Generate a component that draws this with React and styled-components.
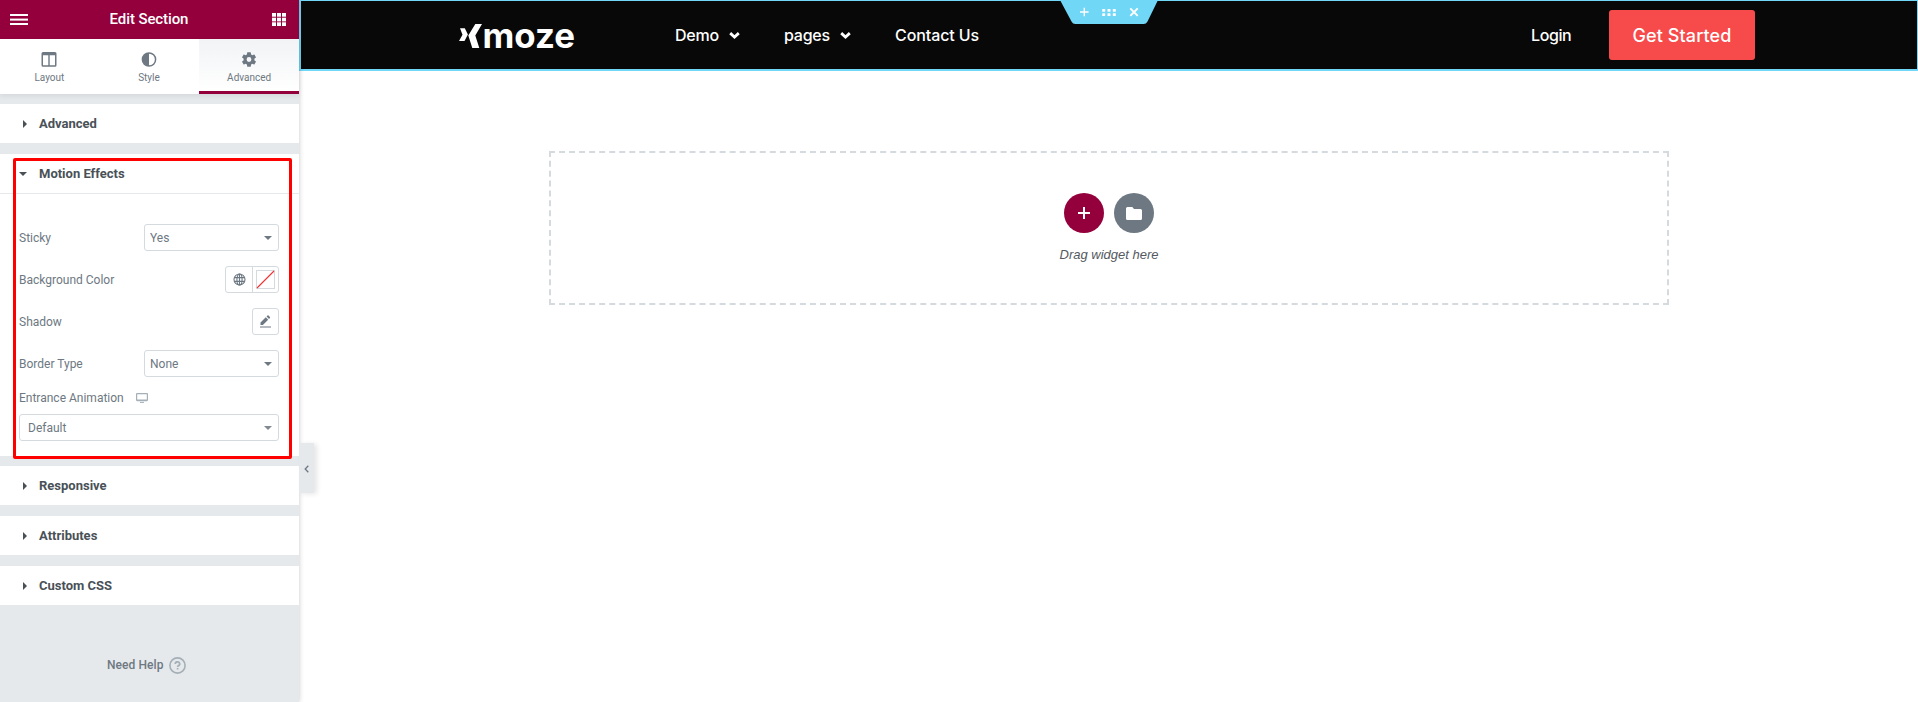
import React from 'react';
import styled, { createGlobalStyle } from 'styled-components';

const Global = createGlobalStyle`
  *, *::before, *::after { box-sizing: border-box; }
  body { margin: 0; background: #fff; overflow: hidden; }
  svg { display: block; flex: none; }
`;

const Editor = styled.div`
  display: flex;
  height: 702px;
  font-family: Roboto, 'Liberation Sans', sans-serif;
  font-size: 12px;
  color: #6d7882;
`;

/* ---------- side panel ---------- */

const Panel = styled.aside`
  position: relative;
  z-index: 1;
  flex: none;
  width: 299px;
  height: 702px;
  display: flex;
  flex-direction: column;
  background: #e6e9ec;
  box-shadow: 0 0 5px rgba(0, 0, 0, 0.22);
`;

const PanelHeader = styled.header`
  flex: none;
  height: 39px;
  padding: 0 13px 1px 10px;
  display: flex;
  align-items: center;
  justify-content: space-between;
  background: #93003c;
  color: #fff;
  font-size: 15px;
  font-weight: 500;
`;

const PanelTitle = styled.span`
  margin-left: -2px;
  letter-spacing: -0.1px;
`;

const Tabs = styled.nav`
  flex: none;
  display: grid;
  grid-template-columns: repeat(3, 1fr);
  height: 55px;
  background: #fff;
  box-shadow: 0 2px 5px rgba(0, 0, 0, 0.08);
`;

const Tab = styled.div`
  display: flex;
  flex-direction: column;
  align-items: center;
  gap: 5px;
  padding: 13px ${(p) => (p.$active ? 0 : 1)}px 0 0;
  font-size: 10px;
  line-height: 12px;
  border-bottom: 3px solid ${(p) => (p.$active ? '#93003c' : 'transparent')};
  background: ${(p) => (p.$active ? 'linear-gradient(#f1f3f5, #fff)' : 'none')};
`;

const Section = styled.section`
  flex: none;
  height: ${(p) => p.$height || 39}px;
  margin-top: ${(p) => p.$gap || 11}px;
  background: #fff;
`;

const SectionTitle = styled.h2`
  margin: 0;
  height: ${(p) => (p.$open ? 40 : 39)}px;
  padding: 0 0 0 ${(p) => (p.$open ? 19 : 23)}px;
  display: flex;
  align-items: center;
  gap: 12px;
  border-bottom: ${(p) => (p.$open ? '1px solid #e6e9ec' : 'none')};
  color: #495157;
  font-size: 13px;
  font-weight: 700;
`;

const Controls = styled.div`
  display: flex;
  flex-direction: column;
  padding: 30px 20px 0 19px;
`;

const Control = styled.div`
  display: flex;
  align-items: center;
  justify-content: space-between;
  height: 27px;
  margin-bottom: 15px;
`;

const StackedLabel = styled.div`
  display: flex;
  align-items: center;
  gap: 12px;
  height: 14px;
  margin: -1px 0 9px;
`;

const Select = styled.div`
  display: flex;
  align-items: center;
  justify-content: space-between;
  width: ${(p) => (p.$wide ? '260px' : '135px')};
  height: 27px;
  padding: 0 6px 0 ${(p) => (p.$wide ? 8 : 5)}px;
  border: 1px solid #d5dadf;
  border-radius: 3px;
  background: #fff;
`;

const ButtonGroup = styled.div`
  display: flex;
  height: 27px;
  border: 1px solid #d5dadf;
  border-radius: 3px;
`;

const IconButton = styled.span`
  width: ${(p) => p.$width || 25}px;
  display: flex;
  align-items: center;
  justify-content: center;

  & + & {
    border-left: 1px solid #d5dadf;
  }
`;

const Help = styled.div`
  display: flex;
  align-items: center;
  gap: 5px;
  margin: 50px 0 0 107px;
  height: 20px;
  font-weight: 500;
  letter-spacing: 0.08px;
`;

const Collapse = styled.div`
  position: absolute;
  left: 299px;
  top: 443px;
  width: 15px;
  height: 50px;
  padding-top: 2px;
  display: flex;
  align-items: center;
  justify-content: center;
  background: #e6e9ec;
  box-shadow: 3px 1px 5px rgba(0, 0, 0, 0.1);
`;

const Highlight = styled.div`
  position: absolute;
  left: 13px;
  top: 158px;
  width: 279px;
  height: 301px;
  border: 3px solid #f00;
  border-radius: 2px;
`;

/* ---------- page preview ---------- */

const Preview = styled.main`
  flex: 1;
  display: flex;
  flex-direction: column;
`;

const SiteHeader = styled.header`
  position: relative;
  display: flex;
  align-items: center;
  height: 71px;
  padding-left: 157px;
  border: solid #71d7f7;
  border-width: 1px 1px 2px 2px;
  background: #080808;
  color: #fff;
  font-family: Inter, sans-serif;
  font-size: 16px;
  font-weight: 500;
`;

const NavMenu = styled.nav`
  display: flex;
  flex: none;
  margin-left: 93px;
`;

const NavLink = styled.span`
  flex: none;
  display: flex;
  align-items: center;
  gap: 10px;
  width: ${(p) => p.$width}px;
  white-space: nowrap;
  letter-spacing: ${(p) => p.$track || 0}px;
`;

const Cta = styled.span`
  display: flex;
  align-items: center;
  justify-content: center;
  width: 146px;
  height: 50px;
  border-radius: 3px;
  background: #f74a4a;
  font-size: 18px;
  letter-spacing: 0.08px;
`;

const SectionHandle = styled.div`
  position: absolute;
  left: 759px;
  top: -1px;
`;

const DropZone = styled.div`
  display: flex;
  flex-direction: column;
  align-items: center;
  width: 1120px;
  height: 154px;
  margin: 80px 0 0 250px;
  padding-top: 40px;
  border: 2px dashed #d5dadf;
`;

const Actions = styled.div`
  display: flex;
  gap: 10px;
`;

const RoundButton = styled.span`
  display: flex;
  align-items: center;
  justify-content: center;
  width: 40px;
  height: 40px;
  border-radius: 50%;
  background: ${(p) => p.$color};
`;

const Hint = styled.span`
  margin-top: 13px;
  font-family: 'Liberation Sans', Arial, sans-serif;
  font-size: 13px;
  line-height: 17px;
  font-style: italic;
  color: #54595f;
`;

/* ---------- icons ---------- */

const Menu = () => (
  <svg width="18" height="13" fill="#fff">
    <rect y="1" width="18" height="2" /><rect y="5.6" width="18" height="2" /><rect y="10" width="18" height="2" />
  </svg>
);

const Grid = () => (
  <svg width="14" height="13" fill="#fff">
    {[0, 4.7, 9.3].map((y) => [0, 5, 10].map((x) => (
      <rect key={`${x}-${y}`} x={x} y={y} width="4" height="3.7" />
    )))}
  </svg>
);

const Columns = () => (
  <svg width="16" height="15" fill="#6d7882">
    <path fillRule="evenodd" d="M2 0h12a1.5 1.5 0 0 1 1.5 1.5v11.7a1.5 1.5 0 0 1-1.5 1.5H2A1.5 1.5 0 0 1 .5 13.2V1.5A1.5 1.5 0 0 1 2 0zM2 3.300v10h5.300v-10zM8.700 3.300v10H14v-10z" />
  </svg>
);

const Contrast = () => (
  <svg width="16" height="15">
    <circle cx="8" cy="7.5" r="6.6" fill="none" stroke="#6d7882" strokeWidth="1.5" />
    <path d="M8 1a6.500 6.500 0 0 0 0 13z" fill="#6d7882" />
  </svg>
);

const Gear = () => (
  <svg width="16" height="15" viewBox="2 2 20 20" fill="#6d7882">
    <path d="M19.140 12.940c.04-.3.06-.61.06-.94 0-.32-.02-.64-.07-.94l2.030-1.580a.49.49 0 0 0 .12-.61l-1.920-3.320a.488.488 0 0 0-.59-.22l-2.390.96c-.5-.38-1.030-.7-1.620-.94l-.36-2.540a.484.484 0 0 0-.48-.41h-3.840c-.24 0-.43.17-.47.41l-.36 2.540c-.59.24-1.130.57-1.620.94l-2.390-.96c-.22-.08-.47 0-.59.22L2.740 8.870c-.12.21-.08.47.12.61l2.030 1.580c-.05.3-.09.63-.09.94s.02.64.07.94l-2.030 1.580a.49.49 0 0 0-.12.61l1.920 3.320c.12.22.37.29.59.22l2.390-.96c.5.38 1.030.7 1.620.94l.36 2.540c.05.24.24.41.48.41h3.840c.24 0 .44-.17.47-.41l.36-2.540c.59-.24 1.130-.56 1.620-.94l2.390.96c.22.08.47 0 .59-.22l1.920-3.320c.12-.22.07-.47-.12-.61l-2.010-1.580zM12 15.200a3.200 3.200 0 1 1 0-6.400 3.200 3.200 0 0 1 0 6.400z" />
  </svg>
);

const CaretRight = () => (
  <svg width="4" height="8" fill="#495157"><path d="M0 0l4 4-4 4z" /></svg>
);

const CaretDown = ({ color = '#6d7882' }) => (
  <svg width="8" height="4" fill={color}><path d="M0 0h8L4 4z" /></svg>
);

const Globe = () => (
  <svg width="13" height="13" fill="none" stroke="#6d7882" strokeWidth="1.1">
    <circle cx="6.5" cy="6.5" r="5.5" />
    <ellipse cx="6.5" cy="6.5" rx="2.6" ry="5.5" />
    <path d="M1.300 4.600h10.400M1.300 8.400h10.400M6.500 1v11" />
  </svg>
);

const NoColor = () => (
  <svg width="19" height="19" fill="none">
    <rect x=".5" y=".5" width="18" height="18" stroke="#d5dadf" />
    <path d="M1 18L18 1" stroke="#f03030" strokeWidth="1.1" />
  </svg>
);

const Pencil = () => (
  <svg width="13" height="13" fill="#6d7882">
    <path d="M1.500 7.600L6.800 2.300l2.400 2.400L3.900 10H1.500zM7.600 1.500l.9-.9q.5-.5 1 0L10.900 2q.5.500 0 1l-.9.900zM1 11.400h11v1.200H1z" />
  </svg>
);

const Monitor = () => (
  <svg width="12" height="10" fill="none" stroke="#a4afb7">
    <rect x=".6" y=".6" width="10.8" height="7" rx=".5" strokeWidth="1.2" /><path d="M1 7h10M4 9.400h4" />
  </svg>
);

const Question = () => (
  <svg width="17" height="17">
    <circle cx="8.5" cy="8.5" r="7.6" fill="none" stroke="#a4afb7" strokeWidth="1.6" />
    <path d="M6.300 7a2.200 2 0 1 1 3.100 1.700q-.8.400-.8 1.200M8.600 11v1.500" fill="none" stroke="#a4afb7" strokeWidth="1.7" />
  </svg>
);

const ChevronLeft = () => (
  <svg width="5" height="8" fill="none" stroke="#6d7882" strokeWidth="1.3"><path d="M4.300.8L1.200 4l3.100 3.200" /></svg>
);

const ChevronDown = () => (
  <svg width="11" height="7" fill="none" stroke="#fff" strokeWidth="2.8"><path d="M1.200 1.100L5.500 5l4.300-3.900" /></svg>
);

const Logo = () => (
  <svg width="124" height="56" viewBox="0 -12 124 56" fill="#fff">
    <path d="M2 9.300h4.800L9.900 15.500 6.500 22H1l3.500-6.300zM17.300 5H24l-6.700 11.600L21.300 29h-7l-4-12.400z" />
    <text x="24.5" y="28.5" fontFamily="Inter, sans-serif" fontSize="34.5" fontWeight="650" textLength="92.5" lengthAdjust="spacingAndGlyphs">moze</text>
  </svg>
);

const HandleShape = () => (
  <svg width="98" height="24">
    <path d="M0 0h98l-10.500 21.500q-1.200 2.500-4 2.500H15.500q-2.800 0-4-2.500z" fill="#71d7f7" />
    <path d="M20 12h8.600M24.300 7.700v8.600" stroke="#fff" strokeWidth="1.4" />
    <path d="M70.300 8.400l7.400 7.400M77.700 8.400l-7.400 7.400" stroke="#fff" strokeWidth="1.9" />
    {[42.2, 47.5, 52.8].map((x) => [9, 13.2].map((y) => (
      <rect key={`${x}-${y}`} x={x} y={y} width="3" height="2.8" rx=".6" fill="#fff" />
    )))}
  </svg>
);

const Plus = () => (
  <svg width="12" height="12" stroke="#fff" strokeWidth="2"><path d="M0 6h12M6 0v12" /></svg>
);

const Folder = () => (
  <svg width="16" height="13" fill="#fff">
    <path d="M1.500 0h4.800l1.700 2h6.500A1.500 1.500 0 0 1 16 3.500v8a1.500 1.500 0 0 1-1.500 1.500h-13A1.500 1.500 0 0 1 0 11.500v-10A1.500 1.500 0 0 1 1.500 0z" />
  </svg>
);

const ClosedSection = ({ title, gap }) => (
  <Section $gap={gap}>
    <SectionTitle><CaretRight />{title}</SectionTitle>
  </Section>
);

export default function App() {
  return (
    <Editor>
      <Global />
      <Panel>
        <PanelHeader><Menu /><PanelTitle>Edit Section</PanelTitle><Grid /></PanelHeader>
        <Tabs>
          <Tab><Columns />Layout</Tab>
          <Tab><Contrast />Style</Tab>
          <Tab $active><Gear />Advanced</Tab>
        </Tabs>
        <ClosedSection title="Advanced" gap={10} />
        <Section $height={302}>
          <SectionTitle $open><CaretDown color="#495157" />Motion Effects</SectionTitle>
          <Controls>
            <Control>Sticky<Select>Yes<CaretDown /></Select></Control>
            <Control>
              Background Color
              <ButtonGroup><IconButton $width={26}><Globe /></IconButton><IconButton $width={26}><NoColor /></IconButton></ButtonGroup>
            </Control>
            <Control>
              Shadow
              <ButtonGroup><IconButton><Pencil /></IconButton></ButtonGroup>
            </Control>
            <Control>Border Type<Select>None<CaretDown /></Select></Control>
            <StackedLabel>Entrance Animation<Monitor /></StackedLabel>
            <Select $wide>Default<CaretDown color="#818a91" /></Select>
          </Controls>
        </Section>
        <ClosedSection title="Responsive" gap={10} />
        <ClosedSection title="Attributes" />
        <ClosedSection title="Custom CSS" />
        <Help>Need Help<Question /></Help>
        <Collapse><ChevronLeft /></Collapse>
        <Highlight />
      </Panel>
      <Preview>
        <SiteHeader>
          <Logo />
          <NavMenu>
            <NavLink $width={109} $track={-0.25}>Demo<ChevronDown /></NavLink>
            <NavLink $width={111} $track={-0.25}>pages<ChevronDown /></NavLink>
            <NavLink $width={636} $track={-0.1}>Contact Us</NavLink>
            <NavLink $width={78} $track={-0.4}>Login</NavLink>
          </NavMenu>
          <Cta>Get Started</Cta>
          <SectionHandle><HandleShape /></SectionHandle>
        </SiteHeader>
        <DropZone>
          <Actions>
            <RoundButton $color="#93003c"><Plus /></RoundButton>
            <RoundButton $color="#6d7882"><Folder /></RoundButton>
          </Actions>
          <Hint>Drag widget here</Hint>
        </DropZone>
      </Preview>
    </Editor>
  );
}
